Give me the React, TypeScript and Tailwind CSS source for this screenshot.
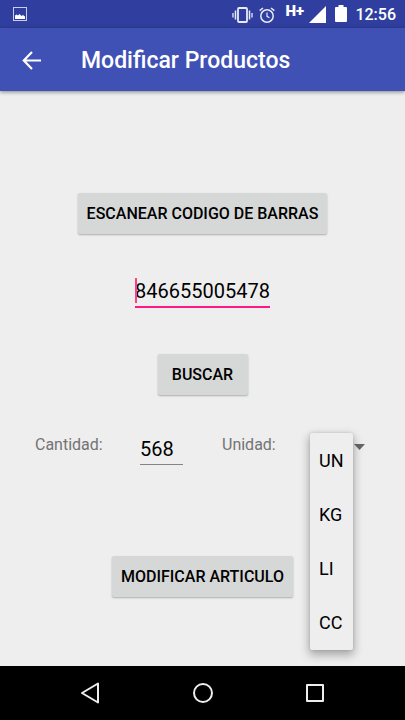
import { useState } from "react";
import type { ReactNode } from "react";

const units = ["UN", "KG", "LI", "CC"];

function StatusBar() {
  return (
    <div className="flex h-7 items-center bg-[#303f9f] pr-[9px] pl-[13px] text-white">
      <svg className="size-3.5" viewBox="0 0 14 14" aria-hidden="true">
        <rect x="0.5" y="0.5" width="13" height="13" fill="none" stroke="#c9cdea" />
        <path d="M2 12V8.500L3.500 7.500L5 8.500L6.500 7L8.500 9L10 8L12 9.500V12Z" fill="white" />
      </svg>
      <div className="ml-auto flex items-center pt-px">
        <svg className="h-4 w-[21px]" viewBox="0 0 21 16" fill="none" stroke="#e8eaf6" aria-hidden="true">
          <rect x="6" y="1" width="9" height="14" rx="1" strokeWidth="1.800" />
          <path d="M3.500 3.500V12.500M17.500 3.500V12.500" strokeWidth="1.500" />
          <path d="M1 6V10.500M20 6V10.500" strokeWidth="1.300" />
        </svg>
        <svg className="ml-1.5 size-4" viewBox="0 0 16 16" fill="none" stroke="#e8eaf6" aria-hidden="true">
          <circle cx="8" cy="9" r="6.200" strokeWidth="1.500" />
          <path d="M0.700 3.700L4 1M15.300 3.700L12 1" strokeWidth="1.500" />
          <path d="M8 5.500V9.300L10.500 10.800" strokeWidth="1.200" />
        </svg>
        <span className="mb-2 ml-2.5 w-5 text-[15px] leading-4 font-black">H+</span>
        <svg className="ml-1 size-[17px]" viewBox="0 0 17 17" fill="white" aria-hidden="true">
          <path d="M17 0V17H0Z" />
        </svg>
        <svg className="mb-0.5 ml-[9px] h-[17px] w-3" viewBox="0 0 12 17" fill="white" aria-hidden="true">
          <path d="M3.500 0H8.500V2H11Q12 2 12 3V16Q12 17 11 17H1Q0 17 0 16V3Q0 2 1 2H3.500Z" />
        </svg>
        <span className="ml-2 pt-px text-[16px] leading-5 font-medium">12:56</span>
      </div>
    </div>
  );
}

function RaisedButton({ children }: { children: ReactNode }) {
  return (
    <button
      type="button"
      className="h-[41px] min-w-[90px] rounded-[2px] bg-[#d6d8d7] px-[9px] text-[16px] leading-5 font-medium whitespace-nowrap text-black shadow-[0_1px_2px_rgba(0,0,0,0.28)]"
    >
      {children}
    </button>
  );
}

function UnitPicker() {
  const [unit, setUnit] = useState("UN");
  return (
    <div className="relative ml-[34px]">
      <select
        id="unidad"
        value={unit}
        onChange={(e) => setUnit(e.target.value)}
        className="block h-7 w-14 appearance-none bg-transparent pl-2.5 text-[18px] text-black outline-none"
      >
        {units.map((u) => (
          <option key={u}>{u}</option>
        ))}
      </select>
      <svg className="pointer-events-none absolute top-[11px] right-0 h-[6px] w-[11px]" viewBox="0 0 11 6" fill="#666" aria-hidden="true">
        <path d="M0 0H11L5.500 6Z" />
      </svg>
      <ul
        role="listbox"
        aria-label="Unidad"
        className="absolute top-0 left-px w-[43px] rounded-[2px] bg-[#eeeeee] pt-px shadow-[0_4px_10px_1px_rgba(0,0,0,0.3),0_0_3px_rgba(0,0,0,0.12)]"
      >
        {units.map((u) => (
          <li
            key={u}
            role="option"
            aria-selected={u === unit}
            onClick={() => setUnit(u)}
            className="flex h-[54px] items-center pl-[9px] text-[18px] leading-6 text-black"
          >
            {u}
          </li>
        ))}
      </ul>
    </div>
  );
}

export default function App() {
  const [code, setCode] = useState("846655005478");
  const [amount, setAmount] = useState("568");
  return (
    <div className="flex min-h-screen flex-col bg-[#eeeeee] font-['Roboto',sans-serif]">
      <StatusBar />
      <header className="z-10 flex h-[63px] items-center bg-[#3f51b5] pt-0.5 pl-[22px] text-white shadow-[0_1px_4px_rgba(0,0,0,0.45)]">
        <button type="button" aria-label="Volver">
          <svg className="block size-5" viewBox="0 0 20 20" fill="none" stroke="white" strokeWidth="2.200" aria-hidden="true">
            <path d="M19 9.500H2.500M10 1L1.800 9.500L10 18" />
          </svg>
        </button>
        <h1 className="ml-[39px] text-[23px] leading-7 font-medium">Modificar Productos</h1>
      </header>

      <main className="flex grow flex-col items-center pt-[102px]">
        <RaisedButton>ESCANEAR CODIGO DE BARRAS</RaisedButton>

        <div className="relative mt-11">
          <input
            aria-label="Codigo de barras"
            value={code}
            onChange={(e) => setCode(e.target.value)}
            className="block h-[30px] w-[135px] border-b-2 border-[#ff1784] bg-transparent pb-0.5 text-[20px] text-black caret-[#ff4081] outline-none"
          />
          <span className="pointer-events-none absolute top-0 left-0 h-[25px] w-0.5 bg-[#ff4081]" />
        </div>

        <div className="mt-[46px] flex">
          <RaisedButton>BUSCAR</RaisedButton>
        </div>

        <div className="mt-[38px] flex w-full items-start pl-[35px] text-[#737373]">
          <label htmlFor="cantidad" className="w-[105px] pt-0.5 text-[16px] leading-5">
            Cantidad:
          </label>
          <input
            id="cantidad"
            value={amount}
            onChange={(e) => setAmount(e.target.value)}
            className="h-8 w-[43px] border-b border-[#848484] bg-transparent text-[20px] text-black outline-none"
          />
          <label htmlFor="unidad" className="ml-[39px] w-[53px] pt-0.5 text-[16px] leading-5">
            Unidad:
          </label>
          <UnitPicker />
        </div>

        <div className="mt-[91px] flex">
          <RaisedButton>MODIFICAR ARTICULO</RaisedButton>
        </div>
      </main>

      <nav className="flex h-[54px] items-center justify-between bg-black px-[79px]">
        <button type="button" aria-label="Atrás">
          <svg className="block size-[22px]" viewBox="0 0 22 22" fill="none" stroke="#eeeeee" strokeWidth="2" strokeLinejoin="round" aria-hidden="true">
            <path d="M19 1.500V20.500L3 11Z" />
          </svg>
        </button>
        <button type="button" aria-label="Inicio">
          <svg className="block size-[22px]" viewBox="0 0 22 22" fill="none" stroke="#eeeeee" strokeWidth="2" aria-hidden="true">
            <circle cx="11" cy="11" r="9" />
          </svg>
        </button>
        <button type="button" aria-label="Recientes">
          <svg className="block size-[22px]" viewBox="0 0 22 22" fill="none" stroke="#eeeeee" strokeWidth="2" strokeLinejoin="round" aria-hidden="true">
            <rect x="3" y="3" width="16" height="16" />
          </svg>
        </button>
      </nav>
    </div>
  );
}
